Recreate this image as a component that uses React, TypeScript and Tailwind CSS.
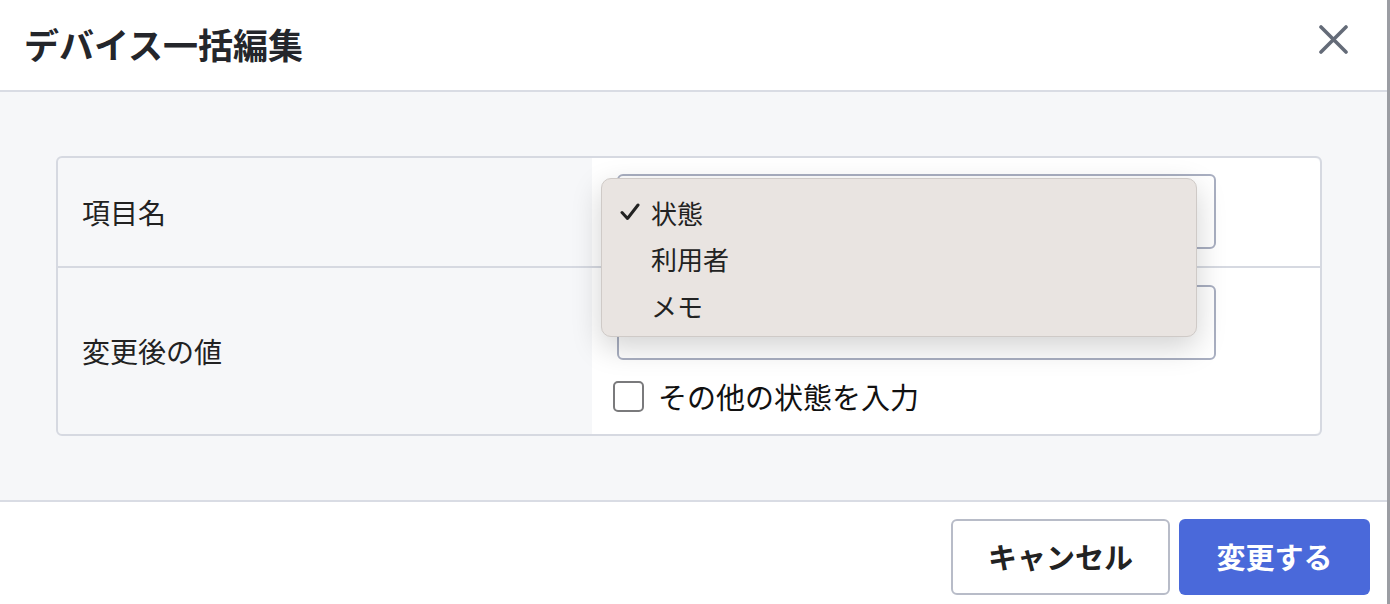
const jp = "font-['Noto_Sans_CJK_JP','Noto_Sans',sans-serif]";

const options = ["状態", "利用者", "メモ"];

const OptionMenu = ({ selected }: { selected: string }) => {
  return (
    <div className="absolute left-[-18px] top-[2px] z-10 w-[596px] h-[159px] rounded-[10px] border border-[#cfcac7] bg-[#e9e4e1] shadow-[0_10px_30px_rgba(0,0,0,0.18)] pt-[10px]">
      {options.map((opt) => (
        <div key={opt} className="flex items-center h-[46.5px] pl-[18px] text-[26px] text-[#222]">
          <span className="w-[31px] flex items-center">
            {opt === selected && (
              <svg width="20" height="18" viewBox="0 0 20 18">
                <path d="M2 9.5 L7.5 15.5 L18 2" fill="none" stroke="#222" strokeWidth="3" strokeLinecap="round" strokeLinejoin="round" />
              </svg>
            )}
          </span>
          <span>{opt}</span>
        </div>
      ))}
    </div>
  );
};

const App = () => {
  return (
    <div className={`flex w-[1390px] h-[604px] overflow-hidden ${jp}`}>
      <div className="w-[1387px] flex flex-col bg-white">
        {/* header */}
        <div className="h-[92px] shrink-0 flex items-center justify-between pl-[24px] pr-[39px] border-b-2 border-[#d9dce4]">
          <h1 className="text-[35px] font-bold text-[#24262b] leading-none pb-[4px]">デバイス一括編集</h1>
          <svg width="29" height="29" viewBox="0 0 29 29" className="mb-[12px]">
            <path d="M2 2 L27 27 M27 2 L2 27" stroke="#646b78" strokeWidth="3.6" strokeLinecap="round" />
          </svg>
        </div>

        {/* body */}
        <div className="flex-1 bg-[#f6f7f9] pt-[64px] pl-[56px] pr-[65px] pb-[64px] border-b-2 border-[#d9dce4]">
          <div className="rounded-md border-2 border-[#d6d9e1]">
            <div className="flex h-[110px] border-b-2 border-[#d6d9e1]">
              <div className="w-[534px] flex items-center pl-[24px] text-[28px] text-[#222] bg-[#f6f7f9] rounded-tl-md">
                項目名
              </div>
              <div className="flex-1 bg-white pl-[25px] pt-[16px] rounded-tr-md">
                <div className="relative w-[599px] h-[75px] rounded-md border-2 border-[#a9afc1] bg-white">
                  <OptionMenu selected="状態" />
                </div>
              </div>
            </div>
            <div className="flex h-[166px]">
              <div className="w-[534px] flex items-center pl-[24px] text-[28px] text-[#222] bg-[#f6f7f9] rounded-bl-md">
                変更後の値
              </div>
              <div className="flex-1 bg-white pl-[25px] pt-[17px] rounded-br-md">
                <div className="w-[599px] h-[75px] rounded-md border-2 border-[#a9afc1] bg-white" />
                <label className="flex items-center gap-[14px] mt-[21px] -ml-[4px]">
                  <span className="w-[31px] h-[31px] rounded-[5px] border-2 border-[#7a7a7c] bg-white" />
                  <span className="text-[29px] text-[#111] leading-none">その他の状態を入力</span>
                </label>
              </div>
            </div>
          </div>
        </div>

        {/* footer */}
        <div className="h-[102px] shrink-0 flex items-start justify-end gap-[9px] pt-[17px] pr-[17px]">
          <button className="w-[219px] h-[76px] rounded-md border-2 border-[#b8bcc8] bg-white text-[29px] font-bold text-[#222]">
            キャンセル
          </button>
          <button className="w-[191px] h-[76px] rounded-md bg-[#4a69da] text-[29px] font-bold text-white">
            変更する
          </button>
        </div>
      </div>
      <div className="flex-1 bg-[#9b9da3]" />
    </div>
  );
};

export default App;
